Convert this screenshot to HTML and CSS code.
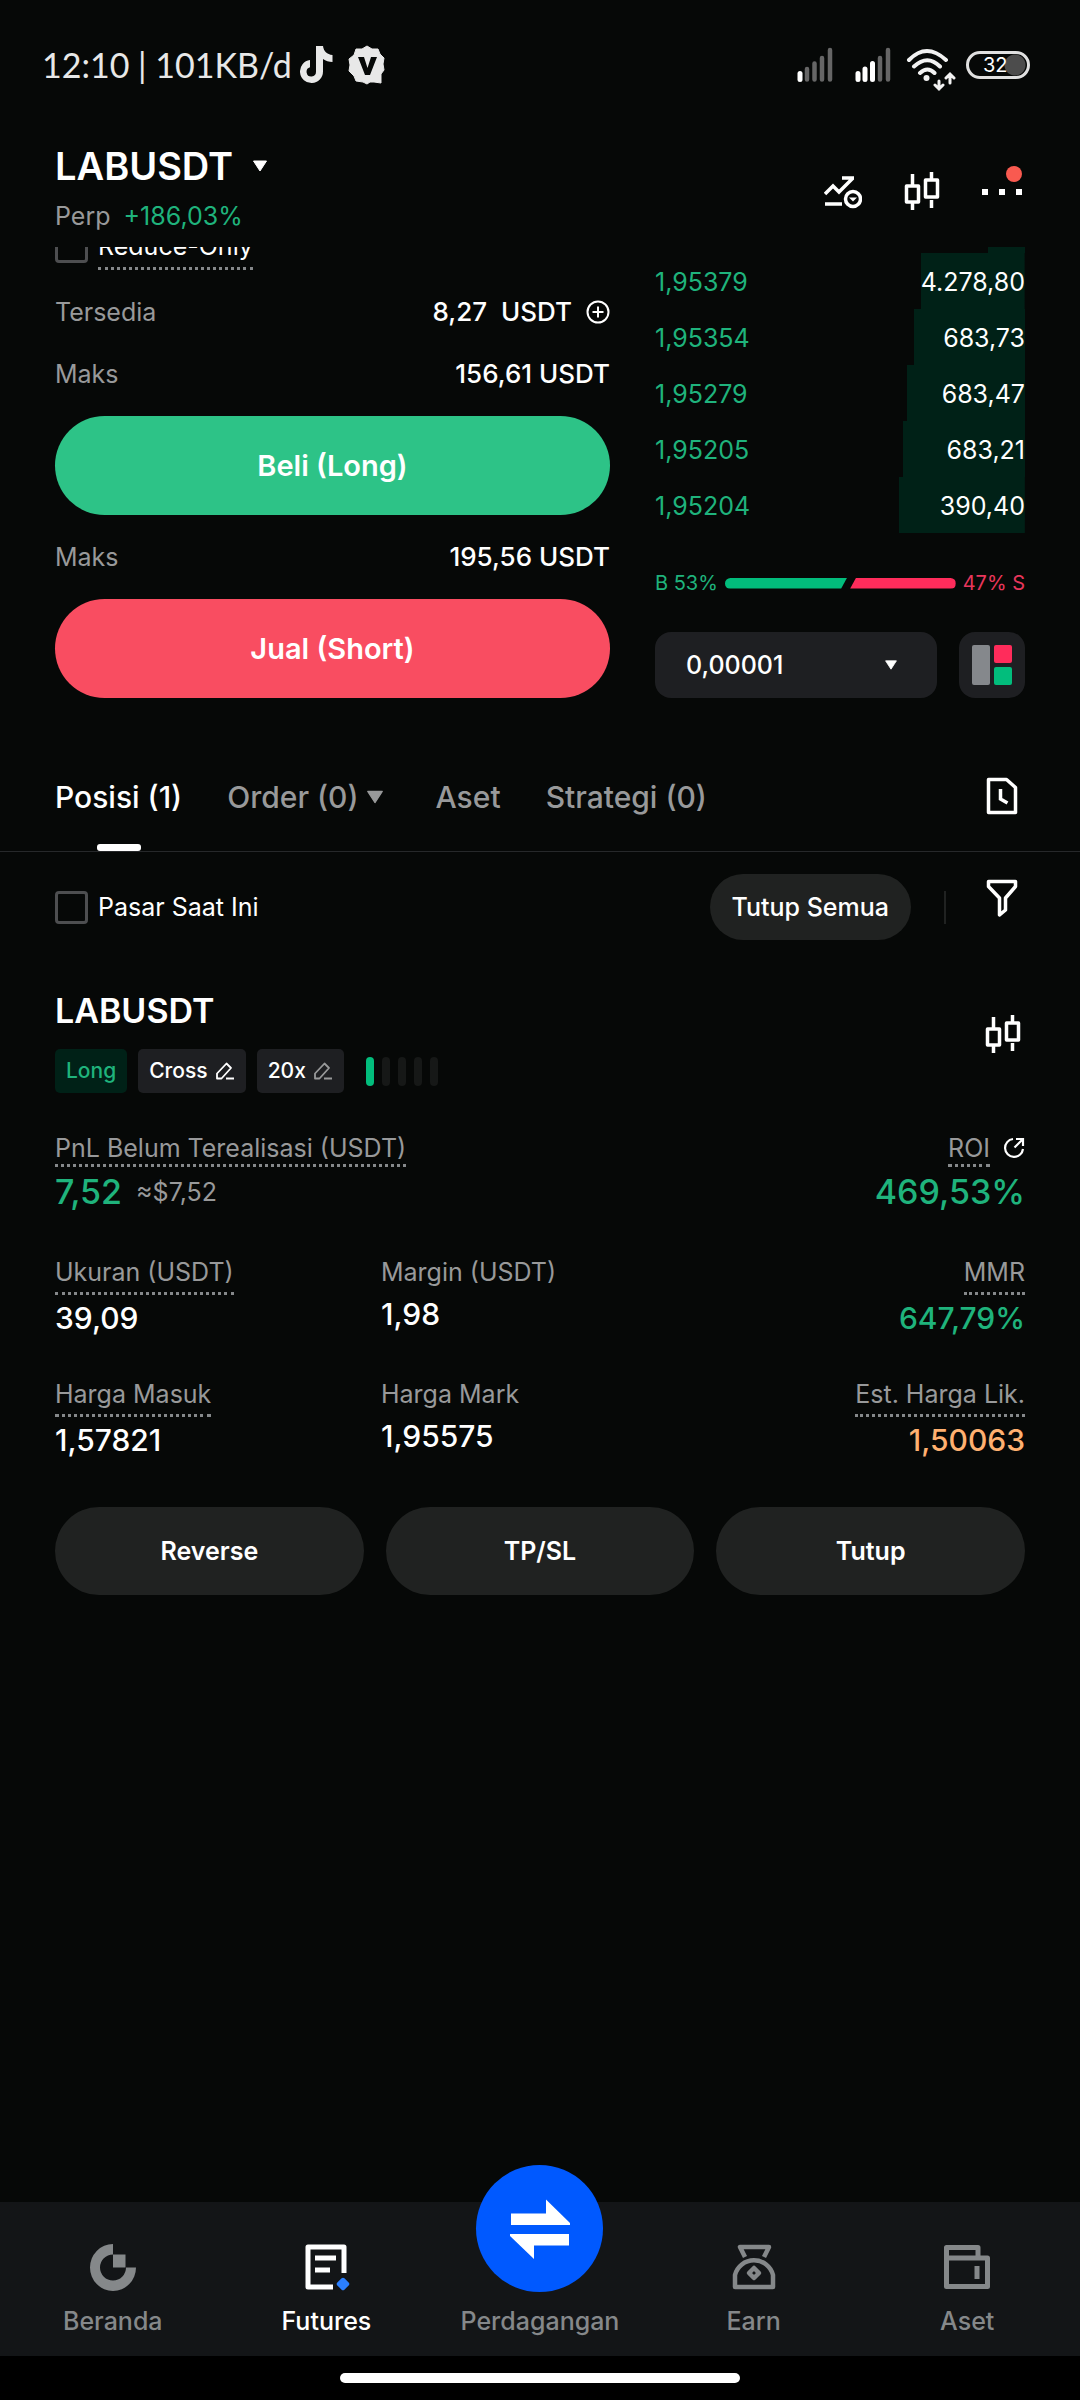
FILE: index.html
```html
<!DOCTYPE html>
<html lang="id">
<head>
    <meta charset="UTF-8">
    <meta name="viewport" content="width=device-width, initial-scale=1.0">
    <title>LABUSDT Perp</title>
    <link rel="stylesheet" href="styles.css">
</head>
<body>
    <svg class="defs" aria-hidden="true">
        <symbol id="candles" viewBox="0 0 36 40">
            <path d="M8.500 2v11M8.500 31v7M27.500 0v9M27.500 28v8" stroke="currentColor" stroke-width="3.500" fill="none"/>
            <path d="M2.500 14h12v16h-12zM21.500 8h12v17h-12z" stroke="currentColor" stroke-width="3.500" stroke-linejoin="round" fill="none"/>
        </symbol>
        <symbol id="edit" viewBox="0 0 20 20">
            <path d="M2 17.500v-5L11.500 2.500 16 7 6.500 17.500zM11 17.500h8" stroke="currentColor" stroke-width="1.800" stroke-linejoin="round" fill="none"/>
        </symbol>
        <symbol id="caret" viewBox="0 0 16 12">
            <path d="M1.500 1h13L8 11z" fill="currentColor" stroke="currentColor" stroke-linejoin="round"/>
        </symbol>
    </svg>

    <div class="status-bar">
        <div class="status-left">
            <span class="clock">12:10 | 101KB/d</span>
            <svg width="34" height="40" viewBox="0 0 34 40">
                <path d="M16 1h7c.6 5 4 8.500 9.500 9v7c-3.500 0-6.800-1-9.500-3v12.500a11.500 11.500 0 1 1-13-11.400v7.200a4.700 4.700 0 1 0 6 4.500z" fill="#e8e8e8"/>
            </svg>
            <svg class="badge-v" width="38" height="40" viewBox="0 0 38 40">
                <path d="M19 1l5 3 6 0 2 5 4 4-1 6 1 6-3 4v9l-7-1-4 0-3 2-4-2-7-1-2-5-5-5 1-6-1-6 5-4 2-6 6 0z" fill="#e8e8e8" stroke="#e8e8e8" stroke-linejoin="round"/>
                <path d="M10 12h6l3.500 11L23 12h6l-7 18h-5z" fill="#060807"/>
            </svg>
        </div>
        <div class="status-right">
            <svg width="36" height="36" viewBox="0 0 36 36">
                <path d="M3 26.500v6" stroke="#fff" stroke-width="5" stroke-linecap="round"/>
                <path d="M10 22v10.500M17.500 16.500v16M25 11v21.500M33 3v29.500" stroke="#666" stroke-width="4.500" stroke-linecap="round"/>
            </svg>
            <svg class="signal-2" width="36" height="36" viewBox="0 0 36 36">
                <path d="M3 26.500v6M10 22v10.500M17.500 16.500v16" stroke="#fff" stroke-width="5" stroke-linecap="round"/>
                <path d="M25 11v21.500M33 3v29.500" stroke="#666" stroke-width="4.500" stroke-linecap="round"/>
            </svg>
            <svg class="wifi" width="50" height="44" viewBox="0 0 50 44">
                <g stroke="#f2f2f2" stroke-width="4" fill="none" stroke-linecap="round">
                    <path d="M3 12q17.500-18 37 0M8 18.500q13.500-12.500 26 0M14 25q7.500-7 14.500 0"/>
                    <path d="M33 33v8m-4-4l4 4 4-4M44 35v-8m-4 3l4-4 4 4" stroke-width="3"/>
                </g>
                <circle cx="20.500" cy="30" r="3" fill="#f2f2f2"/>
            </svg>
            <span class="battery"><span>32</span></span>
        </div>
    </div>

    <header class="pair-header">
        <div>
            <h1>LABUSDT <svg width="18" height="12"><use href="#caret"/></svg></h1>
            <p class="pair-info">Perp <span class="green">+186,03%</span></p>
        </div>
        <div class="header-actions">
            <button class="icon-btn" aria-label="Indikator">
                <svg width="38" height="34" viewBox="0 0 38 34">
                    <path d="M1 19l8-8 6 6L29 3M18 3h12M1 29h17" stroke="#fff" stroke-width="3.500" fill="none"/>
                    <circle cx="29" cy="24" r="7.500" stroke="#fff" stroke-width="3.500" fill="none"/>
                    <path d="M25 22.500h8l-4 4z" fill="#fff"/>
                </svg>
            </button>
            <button class="icon-btn" aria-label="Grafik"><svg width="36" height="40"><use href="#candles"/></svg></button>
            <button class="icon-btn more" aria-label="Lainnya">
                <svg width="40" height="6" viewBox="0 0 40 6"><path d="M0 0h6v6H0zM17 0h6v6h-6zM34 0h6v6h-6z" fill="#fff"/></svg>
            </button>
        </div>
    </header>

    <main>
        <section class="trade">
            <div class="order-form">
                <label class="check reduce"><input type="checkbox"><span class="dotted">Reduce-Only</span></label>
                <div class="line available">
                    <span class="muted">Tersedia</span>
                    <span class="amount">8,27 &nbsp;USDT
                        <svg width="24" height="24" viewBox="0 0 24 24"><path d="M12 6.500v11M6.500 12h11" stroke="#fff" stroke-width="2"/><circle cx="12" cy="12" r="10.500" stroke="#fff" stroke-width="2" fill="none"/></svg>
                    </span>
                </div>
                <div class="line"><span class="muted">Maks</span><span class="amount">156,61 USDT</span></div>
                <button class="order-btn buy">Beli (Long)</button>
                <div class="line"><span class="muted">Maks</span><span class="amount">195,56 USDT</span></div>
                <button class="order-btn sell">Jual (Short)</button>
            </div>

            <div class="order-book">
                <div class="bid cut" style="--depth: 10%"></div>
                <div class="bid" style="--depth: 28%"><span class="green">1,95379</span><span>4.278,80</span></div>
                <div class="bid" style="--depth: 30%"><span class="green">1,95354</span><span>683,73</span></div>
                <div class="bid" style="--depth: 32%"><span class="green">1,95279</span><span>683,47</span></div>
                <div class="bid" style="--depth: 33%"><span class="green">1,95205</span><span>683,21</span></div>
                <div class="bid" style="--depth: 34%"><span class="green">1,95204</span><span>390,40</span></div>
                <div class="ratio">
                    <span class="green">B 53%</span>
                    <div class="ratio-bar">
                        <i class="ratio-buy" style="flex-grow: 53"></i>
                        <i class="ratio-sell" style="flex-grow: 47"></i>
                    </div>
                    <span class="red">47% S</span>
                </div>
                <div class="book-tools">
                    <div class="precision">
                        <select aria-label="Presisi"><option>0,00001</option></select>
                        <svg width="14" height="10"><use href="#caret"/></svg>
                    </div>
                    <button class="layout-btn" aria-label="Tampilan buku order">
                        <svg width="40" height="40" viewBox="0 0 40 40">
                            <rect width="18" height="40" rx="2" fill="#85888c"/>
                            <rect x="22" width="18" height="18" rx="2" fill="#ff2c5b"/>
                            <rect x="22" y="22" width="18" height="18" rx="2" fill="#02bd7c"/>
                        </svg>
                    </button>
                </div>
            </div>
        </section>

        <div class="tabs">
            <button class="tab active">Posisi (1)</button>
            <button class="tab has-menu">Order (0) <svg width="18" height="14"><use href="#caret"/></svg></button>
            <button class="tab">Aset</button>
            <button class="tab">Strategi (0)</button>
            <button class="icon-btn history" aria-label="Riwayat">
                <svg width="32" height="38" viewBox="0 0 32 38"><path d="M2.500 2.500h18l9 8v25h-27z" stroke="#fff" stroke-width="3.500" stroke-linejoin="round" fill="none"/><path d="M14.500 12v10l7 4" stroke="#fff" stroke-width="3.500" fill="none"/></svg>
            </button>
        </div>

        <div class="filters">
            <label class="check"><input type="checkbox"><span>Pasar Saat Ini</span></label>
            <button class="close-all">Tutup Semua</button>
            <span class="divider"></span>
            <button class="icon-btn filter" aria-label="Filter">
                <svg width="32" height="38" viewBox="0 0 32 38"><path d="M2.500 2.500h27v5L19.500 19v12l-6 5V19L2.500 7.500z" stroke="#fff" stroke-width="3.500" stroke-linejoin="round" fill="none"/></svg>
            </button>
        </div>

        <section class="position">
            <div class="position-head">
                <div>
                    <h2>LABUSDT</h2>
                    <div class="tags">
                        <span class="tag long">Long</span>
                        <button class="tag">Cross <svg width="20" height="20"><use href="#edit"/></svg></button>
                        <button class="tag leverage">20x <svg width="20" height="20"><use href="#edit"/></svg></button>
                        <div class="adl"><i class="on"></i><i></i><i></i><i></i><i></i></div>
                    </div>
                </div>
                <button class="icon-btn" aria-label="Grafik"><svg width="36" height="40"><use href="#candles"/></svg></button>
            </div>

            <div class="pnl">
                <div>
                    <span class="label dotted">PnL Belum Terealisasi (USDT)</span>
                    <p class="big green">7,52 <small>≈$7,52</small></p>
                </div>
                <div class="right">
                    <div class="roi">
                        <span class="label dotted">ROI</span>
                        <svg width="22" height="22" viewBox="0 0 22 22"><path d="M10 2a9 9 0 1 0 10 10M11.500 10.500L20 2M13 2h7v7" stroke="#fff" stroke-width="2.200" fill="none"/></svg>
                    </div>
                    <p class="big green">469,53%</p>
                </div>
            </div>

            <div class="stats">
                <div><span class="label dotted">Ukuran (USDT)</span><p>39,09</p></div>
                <div><span class="label">Margin (USDT)</span><p>1,98</p></div>
                <div class="right"><span class="label dotted">MMR</span><p class="green">647,79%</p></div>
                <div><span class="label dotted">Harga Masuk</span><p>1,57821</p></div>
                <div><span class="label">Harga Mark</span><p>1,95575</p></div>
                <div class="right"><span class="label dotted">Est. Harga Lik.</span><p class="orange">1,50063</p></div>
            </div>

            <div class="position-actions">
                <button>Reverse</button>
                <button>TP/SL</button>
                <button>Tutup</button>
            </div>
        </section>
    </main>

    <nav class="bottom-nav">
        <a href="#">
            <svg width="48" height="48" viewBox="0 0 48 48">
                <path d="M24 1a23 23.500 0 1 0 23 23.500H37a13 13 0 1 1-13-13z" fill="#85888a"/>
                <path d="M24 11.500h12.500v13H24z" fill="#85888a"/>
            </svg>
            Beranda
        </a>
        <a href="#" class="current">
            <svg width="48" height="48" viewBox="0 0 48 48">
                <path d="M31 44H6V4h36v26" stroke="#fff" stroke-width="5" stroke-linejoin="round" fill="none"/>
                <path d="M13 15h21M13 27h15" stroke="#fff" stroke-width="5"/>
                <rect x="36" y="36" width="10" height="10" rx="2" transform="rotate(45 41 41)" fill="#2b7fff"/>
            </svg>
            Futures
        </a>
        <a href="#" class="swap">
            <span class="swap-circle">
                <svg width="62" height="62" viewBox="0 0 62 62">
                    <path d="M2 15.500h35V1.500L61 25v2H2zM60 47.500H25v13.500L1 38v-2h59z" fill="#fff"/>
                </svg>
            </span>
            Perdagangan
        </a>
        <a href="#">
            <svg width="48" height="48" viewBox="0 0 48 48">
                <g stroke="#85888a" stroke-width="4.500" stroke-linejoin="round" fill="none">
                    <path d="M15 14L10 4h29l-5 10M5 44V32a19.500 19 0 0 1 38 0v12z"/>
                    <path d="M24 25l5 5-5 5-5-5z"/>
                </g>
            </svg>
            Earn
        </a>
        <a href="#">
            <svg width="48" height="48" viewBox="0 0 48 48">
                <path d="M3.500 15V4.500H35V15M3.500 15h41v28.500h-41z" stroke="#85888a" stroke-width="5" stroke-linejoin="round" fill="none"/>
                <path d="M34 23v13" stroke="#85888a" stroke-width="5"/>
            </svg>
            Aset
        </a>
    </nav>
    <div class="home-bar"><span></span></div>
</body>
</html>
```

FILE: styles.css
```css
* {
    box-sizing: border-box;
}
body {
    margin: 0;
    min-height: 100vh;
    display: flex;
    flex-direction: column;
    font-family: Inter, "Liberation Sans", sans-serif;
    font-size: 25px;
    line-height: 32px;
    background: #060807;
    color: #fff;
}
h1, h2, p {
    margin: 0;
}
button, select, input {
    font: inherit;
    color: inherit;
    border: none;
    background: none;
    margin: 0;
    padding: 0;
}
button {
    cursor: pointer;
}
svg {
    flex-shrink: 0;
}
.defs {
    position: absolute;
    width: 0;
    height: 0;
}
.icon-btn {
    display: flex;
}
.green {
    color: #1fb37c;
}
.red {
    color: #e8365c;
}
.orange {
    color: #ffb070;
}
.muted, .label {
    color: #98999a;
}
.dotted {
    border-bottom: 3px dotted #85888a;
}

/* status bar */
.status-bar {
    display: flex;
    justify-content: space-between;
    align-items: center;
    height: 130px;
    padding: 0 50px 0 42px;
}
.status-left, .status-right {
    display: flex;
    align-items: center;
}
.clock {
    font-family: Lato, sans-serif;
    font-size: 34px;
    margin-right: 8px;
    color: #e8e8e8;
}
.badge-v {
    margin-left: 14px;
}
.signal-2 {
    margin: 0 15px 0 22px;
}
.wifi {
    margin: 10px 10px 0 0;
}
.battery {
    width: 64px;
    height: 28px;
    padding: 0 4px 0 14px;
    border: 3px solid #e0e0e0;
    border-radius: 14px;
    font-size: 20px;
    line-height: 22px;
    background: radial-gradient(circle at 46px 11px, #4c4c4c 10px, transparent 11px);
}

/* pair header */
.pair-header {
    display: flex;
    justify-content: space-between;
    align-items: center;
    height: 117px;
    padding: 12px 58px 15px 55px;
}
h1 {
    display: flex;
    align-items: center;
    gap: 18px;
    font-size: 38px;
    font-weight: 600;
    line-height: 48px;
}
.pair-info {
    margin-top: 10px;
    color: #98999a;
}
.pair-info .green {
    margin-left: 6px;
}
.header-actions {
    display: flex;
    align-items: center;
    gap: 42px;
    margin-top: 10px;
}
.more {
    position: relative;
}
.more::after {
    content: "";
    position: absolute;
    right: 0;
    bottom: 13px;
    width: 16px;
    height: 16px;
    border-radius: 50%;
    background: #f95a50;
}

/* order form and book */
.trade {
    display: grid;
    grid-template-columns: 3fr 2fr;
    gap: 45px;
    padding: 0 55px;
    overflow: hidden;
}
.order-form {
    display: flex;
    flex-direction: column;
    gap: 26px;
}
.check {
    display: flex;
    align-items: center;
    gap: 10px;
}
.check input {
    appearance: none;
    width: 33px;
    height: 33px;
    border: 3px solid #4d4e50;
    border-radius: 4px;
}
.reduce {
    align-items: flex-start;
    margin-top: -17px;
}
.reduce .dotted {
    padding-bottom: 5px;
}
.line {
    display: flex;
    justify-content: space-between;
}
.available {
    margin-bottom: 4px;
}
.amount {
    display: flex;
    align-items: center;
    gap: 14px;
    font-size: 26px;
    font-weight: 500;
}
.order-btn {
    height: 99px;
    border-radius: 50px;
    font-size: 29px;
    font-weight: 600;
}
.buy {
    background: #2dc387;
}
.sell {
    background: #f94d61;
}
.bid {
    display: flex;
    justify-content: space-between;
    align-items: center;
    height: 56px;
    padding-top: 2px;
    background: linear-gradient(#002117, #002117) right / var(--depth) 100% no-repeat;
}
.bid.cut {
    height: 6px;
}
.ratio {
    display: flex;
    align-items: center;
    gap: 7px;
    margin: 36px 0 35px;
    font-size: 20px;
    line-height: 28px;
}
.ratio-bar {
    display: flex;
    flex: 1;
    height: 11px;
    border-radius: 6px;
    overflow: hidden;
}
.ratio-buy {
    background: #02bd7c;
    clip-path: polygon(0 0, 100% 0, calc(100% - 6px) 100%, 0 100%);
}
.ratio-sell {
    background: #ff2c5b;
    clip-path: polygon(9px 0, 100% 0, 100% 100%, 3px 100%);
}
.book-tools {
    display: flex;
    gap: 22px;
}
.precision {
    position: relative;
    flex: 1;
}
.precision select {
    appearance: none;
    width: 100%;
    height: 66px;
    padding-left: 31px;
    border-radius: 16px;
    background: #1e1f22;
    font-weight: 500;
}
.precision svg {
    position: absolute;
    right: 39px;
    top: 28px;
    pointer-events: none;
}
.layout-btn {
    display: flex;
    align-items: center;
    justify-content: center;
    width: 66px;
    height: 66px;
    border-radius: 16px;
    background: #1e1f22;
}

/* tabs */
.tabs {
    display: flex;
    gap: 45px;
    margin-top: 58px;
    padding: 21px 62px 0 55px;
    border-bottom: 1px solid #26282a;
}
.tab {
    display: flex;
    align-items: center;
    gap: 8px;
    position: relative;
    padding-bottom: 34px;
    font-size: 30px;
    font-weight: 500;
    line-height: 40px;
    color: #98999a;
}
.tab.active {
    color: #fff;
}
.tab.active::after {
    content: "";
    position: absolute;
    left: 50%;
    bottom: 0;
    width: 44px;
    height: 7px;
    margin-left: -22px;
    border-radius: 3px;
    background: #fff;
}
.has-menu {
    margin-right: 6px;
}
.history {
    margin-left: auto;
}

/* filter row */
.filters {
    display: flex;
    align-items: center;
    padding: 22px 62px 0 55px;
}
.close-all {
    height: 66px;
    margin-left: auto;
    padding: 0 22px;
    border-radius: 33px;
    background: #202221;
    font-weight: 500;
}
.divider {
    width: 2px;
    height: 33px;
    margin: 0 40px 0 33px;
    background: #202221;
}
.filter {
    margin-bottom: 18px;
}

/* open position */
.position {
    padding: 49px 55px 40px;
}
.position-head {
    display: flex;
    justify-content: space-between;
    align-items: flex-start;
}
.position-head .icon-btn {
    margin: 26px 4px 0 0;
}
h2 {
    font-size: 34px;
    font-weight: 600;
    line-height: 44px;
}
.tags {
    display: flex;
    align-items: center;
    gap: 11px;
    margin-top: 16px;
}
.tag {
    display: flex;
    align-items: center;
    gap: 7px;
    height: 44px;
    padding: 0 11px;
    border-radius: 5px;
    background: #1e1f22;
    font-size: 21px;
    font-weight: 500;
}
.long {
    background: #002117;
    color: #1fb37c;
}
.leverage svg {
    color: #98999a;
}
.adl {
    display: flex;
    gap: 8px;
    margin-left: 11px;
}
.adl i {
    width: 8px;
    height: 29px;
    border-radius: 4px;
    background: #161817;
}
.adl .on {
    background: #02bd7c;
}
.pnl {
    display: flex;
    justify-content: space-between;
    margin: 39px 0 44px;
}
.right {
    text-align: right;
}
.label {
    display: inline-block;
    vertical-align: top;
    margin-bottom: 8px;
}
.label.dotted {
    margin-bottom: 5px;
}
.roi {
    display: flex;
    justify-content: flex-end;
    gap: 13px;
}
.roi svg {
    margin-top: 5px;
}
.big {
    display: flex;
    align-items: center;
    gap: 14px;
    font-size: 34px;
    font-weight: 500;
    line-height: 40px;
}
.right .big {
    justify-content: flex-end;
}
.big small {
    font-size: 25px;
    font-weight: 400;
    color: #98999a;
}
.stats {
    display: grid;
    grid-template-columns: repeat(3, 1fr);
    gap: 42px 8px;
}
.stats .dotted {
    padding-bottom: 4px;
}
.stats p {
    font-size: 30px;
    font-weight: 500;
    line-height: 36px;
}
.position-actions {
    display: grid;
    grid-template-columns: repeat(3, 1fr);
    gap: 22px;
    margin-top: 49px;
}
.position-actions button {
    height: 88px;
    border-radius: 44px;
    background: #202221;
    font-weight: 600;
}

/* bottom navigation */
.bottom-nav {
    display: grid;
    grid-template-columns: repeat(5, 1fr);
    height: 154px;
    margin-top: auto;
    padding: 0 6px;
    background: #131517;
}
.bottom-nav a {
    display: flex;
    flex-direction: column;
    align-items: center;
    justify-content: flex-end;
    gap: 14px;
    padding-bottom: 19px;
    font-weight: 500;
    color: #85888a;
    text-decoration: none;
}
.bottom-nav .current {
    color: #fff;
}
.bottom-nav .swap {
    position: relative;
}
.swap-circle {
    position: absolute;
    top: -37px;
    display: flex;
    align-items: center;
    justify-content: center;
    width: 127px;
    height: 127px;
    border-radius: 50%;
    background: #0059ff;
}
.home-bar {
    display: flex;
    justify-content: center;
    height: 44px;
    padding-top: 17px;
    background: #000;
}
.home-bar span {
    width: 37%;
    height: 10px;
    border-radius: 5px;
    background: #fff;
}
```
